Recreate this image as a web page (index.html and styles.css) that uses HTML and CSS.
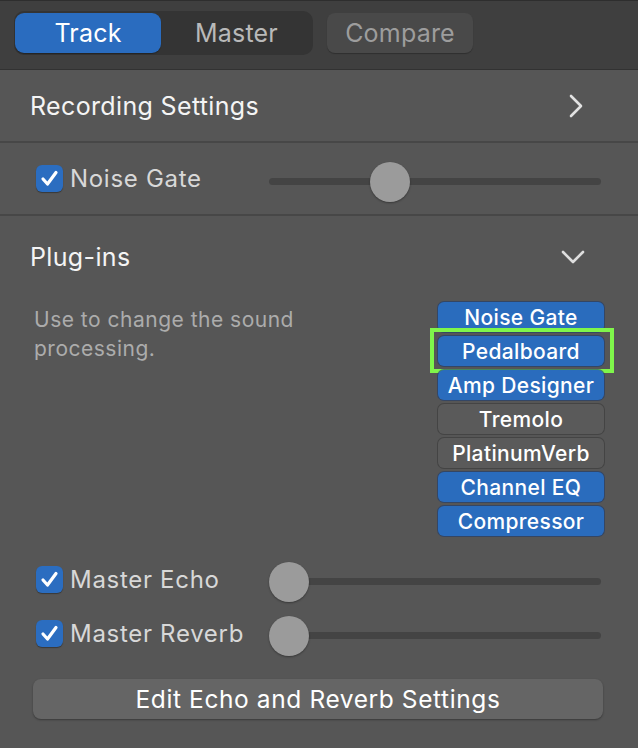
FILE: index.html
```html
<!DOCTYPE html>
<html>
<head>
<meta charset="utf-8">
<link rel="stylesheet" href="styles.css">
</head>
<body>
<div class="panel">
  <header class="topbar">
    <div class="segmented">
      <div class="seg seg-active">Track</div>
      <div class="seg">Master</div>
    </div>
    <div class="compare">Compare</div>
  </header>

  <div class="row nav-row">
    <span class="heading">Recording Settings</span>
    <svg class="chev-right" width="16" height="24" viewBox="0 0 16 24"><path d="M3 2 L13 12 L3 22" fill="none" stroke="#e2e2e2" stroke-width="2.6" stroke-linecap="round" stroke-linejoin="round"/></svg>
  </div>

  <div class="row toggle-row">
    <label class="check">
      <span class="box"><svg width="27" height="27" viewBox="0 0 27 27"><path d="M7 14 L11.5 19 L20 7.5" fill="none" stroke="#fff" stroke-width="3.2" stroke-linecap="round" stroke-linejoin="round"/></svg></span>
      <span class="label">Noise Gate</span>
    </label>
    <div class="slider"><div class="track"></div><div class="knob" style="left:101px"></div></div>
  </div>

  <section class="plugins">
    <div class="plugins-head">
      <span class="heading">Plug-ins</span>
      <svg class="chev-down" width="26" height="16" viewBox="0 0 26 16"><path d="M3 3 L13 13 L23 3" fill="none" stroke="#dedede" stroke-width="2.6" stroke-linecap="round" stroke-linejoin="round"/></svg>
    </div>
    <div class="plugins-body">
      <p class="desc">Use to change the sound processing.</p>
      <div class="plugin-list">
        <div class="plug on">Noise Gate</div>
        <div class="plug on highlight">Pedalboard</div>
        <div class="plug on">Amp Designer</div>
        <div class="plug off">Tremolo</div>
        <div class="plug off">PlatinumVerb</div>
        <div class="plug on">Channel EQ</div>
        <div class="plug on">Compressor</div>
      </div>
    </div>

    <div class="master-rows">
      <div class="mrow">
        <label class="check">
          <span class="box"><svg width="27" height="27" viewBox="0 0 27 27"><path d="M7 14 L11.5 19 L20 7.5" fill="none" stroke="#fff" stroke-width="3.2" stroke-linecap="round" stroke-linejoin="round"/></svg></span>
          <span class="label">Master Echo</span>
        </label>
        <div class="slider"><div class="track"></div><div class="knob" style="left:0px"></div></div>
      </div>
      <div class="mrow">
        <label class="check">
          <span class="box"><svg width="27" height="27" viewBox="0 0 27 27"><path d="M7 14 L11.5 19 L20 7.5" fill="none" stroke="#fff" stroke-width="3.2" stroke-linecap="round" stroke-linejoin="round"/></svg></span>
          <span class="label">Master Reverb</span>
        </label>
        <div class="slider"><div class="track"></div><div class="knob" style="left:0px"></div></div>
      </div>
    </div>

    <div class="edit-btn">Edit Echo and Reverb Settings</div>
  </section>
</div>
</body>
</html>
```

FILE: styles.css
```css
* { box-sizing: border-box; }
html, body {
  margin: 0;
  padding: 0;
  background: #565656;
  font-family: Inter, "Liberation Sans", sans-serif;
}
.panel {
  width: 638px;
  height: 748px;
  background: #565656;
  overflow: hidden;
}
.topbar {
  height: 70px;
  background: #3f3f3f;
  border-top: 1px solid #2e2e2e;
  border-bottom: 1px solid #323232;
  display: flex;
  align-items: flex-start;
  padding: 10px 0 0 14px;
  gap: 14px;
}
.segmented {
  width: 299px;
  height: 44px;
  background: #343434;
  border-radius: 10px;
  display: flex;
  padding: 2px 1px;
}
.seg {
  flex: 1;
  display: flex;
  align-items: center;
  justify-content: center;
  font-size: 25px;
  color: #b9b9b9;
  border-radius: 9px;
  letter-spacing: 0.2px;
}
.seg-active {
  flex: 0 0 146px;
  background: #2a6cbf;
  color: #ffffff;
  box-shadow: 0 1px 1px rgba(0,0,0,0.3);
}
.compare {
  margin-top: 2px;
  width: 146px;
  height: 40px;
  border-radius: 8px;
  background: #494949;
  color: #9d9d9d;
  font-size: 25px;
  letter-spacing: 0.2px;
  display: flex;
  align-items: center;
  justify-content: center;
  box-shadow: 0 1px 1px rgba(0,0,0,0.25);
}
.row {
  display: flex;
  align-items: center;
  border-bottom: 2px solid #474747;
}
.nav-row {
  height: 73px;
  padding: 0 54px 0 30px;
  justify-content: space-between;
}
.heading {
  font-size: 25px;
  letter-spacing: 0.35px;
  color: #f4f4f4;
}
.chev-right { display: block; }
.toggle-row {
  height: 73px;
  padding: 0 37px 0 36px;
}
.check {
  display: flex;
  align-items: center;
  gap: 7px;
  width: 233px;
}
.box {
  width: 27px;
  height: 27px;
  border-radius: 6px;
  background: #2b6dc0;
  display: block;
  box-shadow: 0 1px 1px rgba(0,0,0,0.35);
}
.box svg { display: block; }
.label {
  font-size: 24px;
  letter-spacing: 0.7px;
  color: #d8d8d8;
}
.slider {
  position: relative;
  width: 332px;
  height: 40px;
  margin-top: 7px;
}
.track {
  position: absolute;
  left: 0;
  right: 0;
  top: 16px;
  height: 7px;
  border-radius: 4px;
  background: #444444;
}
.knob {
  position: absolute;
  top: 0;
  width: 40px;
  height: 40px;
  border-radius: 50%;
  background: #9b9b9b;
  box-shadow: 0 1px 2px rgba(0,0,0,0.35);
}
.plugins {
  padding: 0;
}
.plugins-head {
  height: 86px;
  display: flex;
  align-items: center;
  justify-content: space-between;
  padding: 0 52px 4px 30px;
}
.plugins-body {
  display: flex;
  justify-content: space-between;
  padding: 0 34px 0 34px;
}
.desc {
  margin: 3px 0 0 0;
  width: 290px;
  font-size: 21px;
  letter-spacing: 0.5px;
  line-height: 29px;
  color: #acacac;
}
.plugin-list {
  width: 166px;
  display: flex;
  flex-direction: column;
  gap: 4px;
}
.plug {
  position: relative;
  height: 30px;
  border-radius: 6px;
  display: flex;
  align-items: center;
  justify-content: center;
  font-size: 21px;
  letter-spacing: 0.35px;
  font-weight: 500;
  color: #ffffff;
}
.plug.on {
  background: #2a6cbd;
  box-shadow: 0 0 0 1px rgba(30,60,110,0.6);
}
.plug.off {
  background: #5a5a5a;
  box-shadow: 0 0 0 1px #444444;
}
.highlight::after {
  content: "";
  position: absolute;
  left: -8px;
  right: -10px;
  top: -8px;
  bottom: -7px;
  border: 4px solid #7ff64b;
}
.master-rows {
  margin-top: 23px;
  display: flex;
  flex-direction: column;
  gap: 14px;
  padding: 0 37px 0 36px;
}
.mrow {
  display: flex;
  align-items: center;
  height: 40px;
}
.mrow .slider { margin-top: 6px; }
.edit-btn {
  margin: 26px 35px 0 33px;
  height: 40px;
  border-radius: 8px;
  background: #656565;
  color: #ffffff;
  font-size: 24.5px;
  letter-spacing: 0.6px;
  display: flex;
  align-items: center;
  justify-content: center;
  box-shadow: 0 1px 2px rgba(0,0,0,0.35);
}
```
